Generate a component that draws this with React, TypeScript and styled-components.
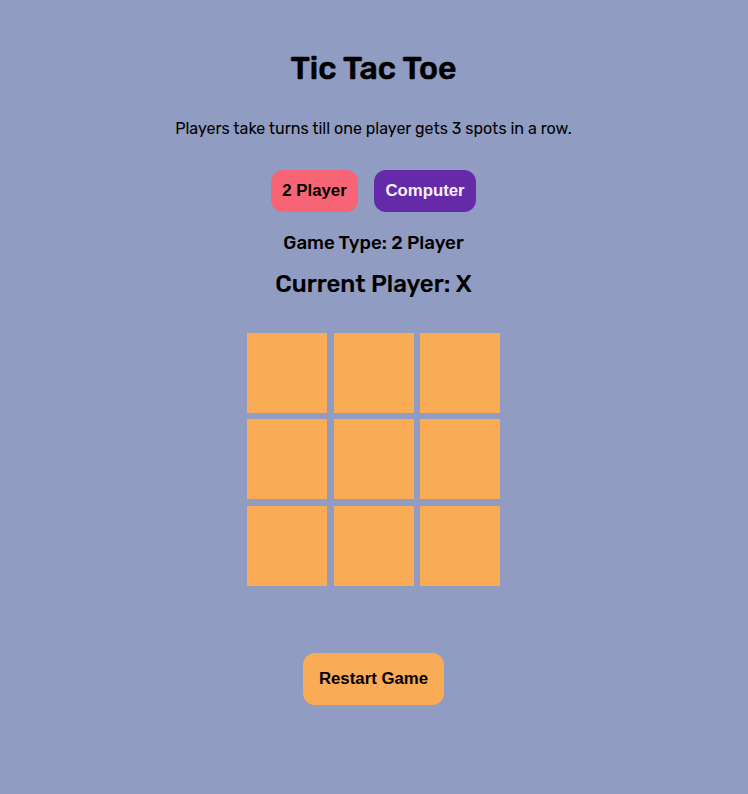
import React from 'react';
import styled, { createGlobalStyle } from 'styled-components';

const GlobalStyle = createGlobalStyle`
  body { margin: 0; background: #919cc2; color: #000; font-family: Rubik, Roboto, sans-serif; }
`;
const Page = styled.main`
  min-height: 794px; box-sizing: border-box; padding: 49px 1px 0 0;
  display: flex; flex-direction: column; align-items: center; background: #919cc2;
`;
const Title = styled.h1`
  margin: 0 0 32px; font-size: 32px; font-weight: 500; line-height: 38px;
  -webkit-text-stroke: 0.6px #000;
`;
const Intro = styled.p`margin: 0 0 32px; font-size: 16px; line-height: 19px;`;
const GameType = styled.h3`
  margin: 0 0 16px; font-size: 18.72px; font-weight: 500; line-height: 22px;
`;
const CurrentPlayer = styled.h2`
  margin: 0 0 34px; font-size: 24px; font-weight: 500; line-height: 29px;
  -webkit-text-stroke: 0.15px #000;
`;
const Modes = styled.div`display: flex; gap: 16px; margin-bottom: 20px;`;
const Button = styled.button<{ $bg: string; $fg?: string; $w: number; $h: number }>`
  width: ${p => p.$w}px; height: ${p => p.$h}px; padding: 0; border: 0; border-radius: 12px;
  background: ${p => p.$bg}; color: ${p => p.$fg || '#000'};
  font: bold 16.8px 'Liberation Sans', Arial, sans-serif;
`;
const Board = styled.div`
  display: grid; grid-template-columns: repeat(3, 80px); grid-auto-rows: 80px; gap: 6.4px; margin-bottom: 67px;
`;
const Cell = styled.div`background: #faab55;`;

export default function App() {
  return (
    <Page>
      <GlobalStyle />
      <Title>Tic Tac Toe</Title>
      <Intro>Players take turns till one player gets 3 spots in a row.</Intro>
      <Modes>
        <Button $bg="#f76475" $w={87} $h={42}>2 Player</Button>
        <Button $bg="#652aa8" $fg="#f5f0fa" $w={102} $h={42}>Computer</Button>
      </Modes>
      <GameType>Game Type: 2 Player</GameType>
      <CurrentPlayer>Current Player: X</CurrentPlayer>
      <Board>{Array.from({ length: 9 }, (_, i) => <Cell key={i} />)}</Board>
      <Button $bg="#faab55" $w={141} $h={52}>Restart Game</Button>
    </Page>
  );
}
